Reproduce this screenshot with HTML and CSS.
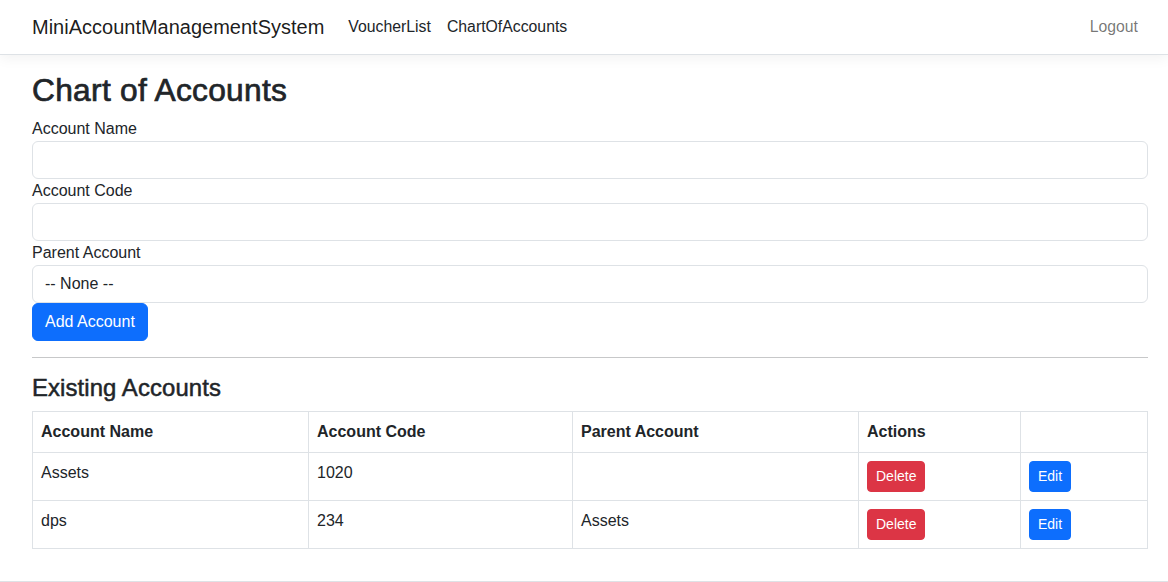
FILE: index.html
```html
<!DOCTYPE html>
<html lang="en">
<head>
<meta charset="utf-8">
<title>Chart of Accounts - MiniAccountManagementSystem</title>
<link rel="stylesheet" href="styles.css">
</head>
<body>
<header class="navbar">
  <div class="nav-inner">
    <a class="brand" href="#">MiniAccountManagementSystem</a>
    <nav class="nav-links">
      <a class="nav-link dark" href="#">VoucherList</a>
      <a class="nav-link dark" href="#">ChartOfAccounts</a>
    </nav>
    <a class="nav-link muted" href="#">Logout</a>
  </div>
</header>
<main class="container">
  <h2 class="page-title">Chart of Accounts</h2>
  <form class="account-form">
    <label class="form-label">Account Name</label>
    <input class="form-control" type="text">
    <label class="form-label">Account Code</label>
    <input class="form-control" type="text">
    <label class="form-label">Parent Account</label>
    <div class="form-control select">-- None --</div>
    <div><button type="button" class="btn btn-primary">Add Account</button></div>
  </form>
  <hr class="divider">
  <h4 class="section-title">Existing Accounts</h4>
  <table class="table">
    <colgroup>
      <col class="c1"><col class="c2"><col class="c3"><col class="c4"><col>
    </colgroup>
    <thead>
      <tr><th>Account Name</th><th>Account Code</th><th>Parent Account</th><th>Actions</th><th></th></tr>
    </thead>
    <tbody>
      <tr><td>Assets</td><td>1020</td><td></td><td><button class="btn btn-sm btn-danger">Delete</button></td><td><button class="btn btn-sm btn-primary">Edit</button></td></tr>
      <tr><td>dps</td><td>234</td><td>Assets</td><td><button class="btn btn-sm btn-danger">Delete</button></td><td><button class="btn btn-sm btn-primary">Edit</button></td></tr>
    </tbody>
  </table>
</main>
<footer class="footer"></footer>
</body>
</html>
```
FILE: styles.css
```css
* { box-sizing: border-box; }
html, body { margin: 0; padding: 0; }
body {
  font-family: "Liberation Sans", Arial, sans-serif;
  font-size: 16px;
  line-height: 1.5;
  color: #212529;
  background: #fff;
}
a { text-decoration: none; }

.navbar {
  height: 55px;
  border-bottom: 1px solid #dee2e6;
  box-shadow: 0 .25rem .75rem rgba(0,0,0,.05);
  background: #fff;
  margin-bottom: 16px;
}
.nav-inner {
  display: flex;
  align-items: center;
  height: 54px;
  padding: 0 22px 0 32px;
}
.brand {
  font-size: 20px;
  color: rgba(0,0,0,.9);
  margin-right: 16px;
  line-height: 30px;
}
.nav-links { display: flex; flex: 1; }
.nav-link { padding: 8px; font-size: 15.8px; }
.nav-link.dark { color: #212529; }
.nav-link.muted { color: rgba(0,0,0,.55); }

.container { padding: 0 20px 16px 32px; }
.page-title {
  font-size: 31.7px;
  font-weight: 500;
  line-height: 1.2;
  margin: 0 0 8px;
  -webkit-text-stroke: 0.7px #212529;
  letter-spacing: 0.3px;
}
.account-form { display: flex; flex-direction: column; }
.form-label { display: block; line-height: 24px; }
.form-control {
  display: block;
  width: 100%;
  height: 38px;
  padding: 6px 12px;
  font: inherit;
  color: #212529;
  border: 1px solid #dee2e6;
  border-radius: 6px;
  background: #fff;
}
.btn {
  display: inline-block;
  font-family: inherit;
  font-size: 16px;
  line-height: 24px;
  padding: 6px 12px;
  border: 1px solid transparent;
  border-radius: 6px;
  color: #fff;
  cursor: pointer;
}
.btn-primary { background: #0d6efd; border-color: #0d6efd; }
.btn-danger { background: #dc3545; border-color: #dc3545; }
.btn-sm { font-size: 14px; line-height: 21px; padding: 4px 8px; border-radius: 4px; }

.divider {
  margin: 16px 0;
  border: 0;
  border-top: 1px solid rgba(33,37,41,.25);
}
.section-title {
  font-size: 23.9px;
  font-weight: 500;
  line-height: 1.2;
  margin: 0 0 8px;
  -webkit-text-stroke: 0.5px #212529;
  letter-spacing: 0.1px;
}
.table {
  width: 100%;
  border-collapse: collapse;
  margin-bottom: 16px;
  table-layout: fixed;
}
.table .c1 { width: 276px; }
.table .c2 { width: 264px; }
.table .c3 { width: 286px; }
.table .c4 { width: 162px; }
.table th, .table td {
  border: 1px solid #dee2e6;
  padding: 8px;
  text-align: left;
  vertical-align: top;
  line-height: 24px;
}
.table th { font-weight: 700; }
.table td .btn { vertical-align: top; }
.footer {
  border-top: 1px solid #dee2e6;
  height: 1px;
}
```
